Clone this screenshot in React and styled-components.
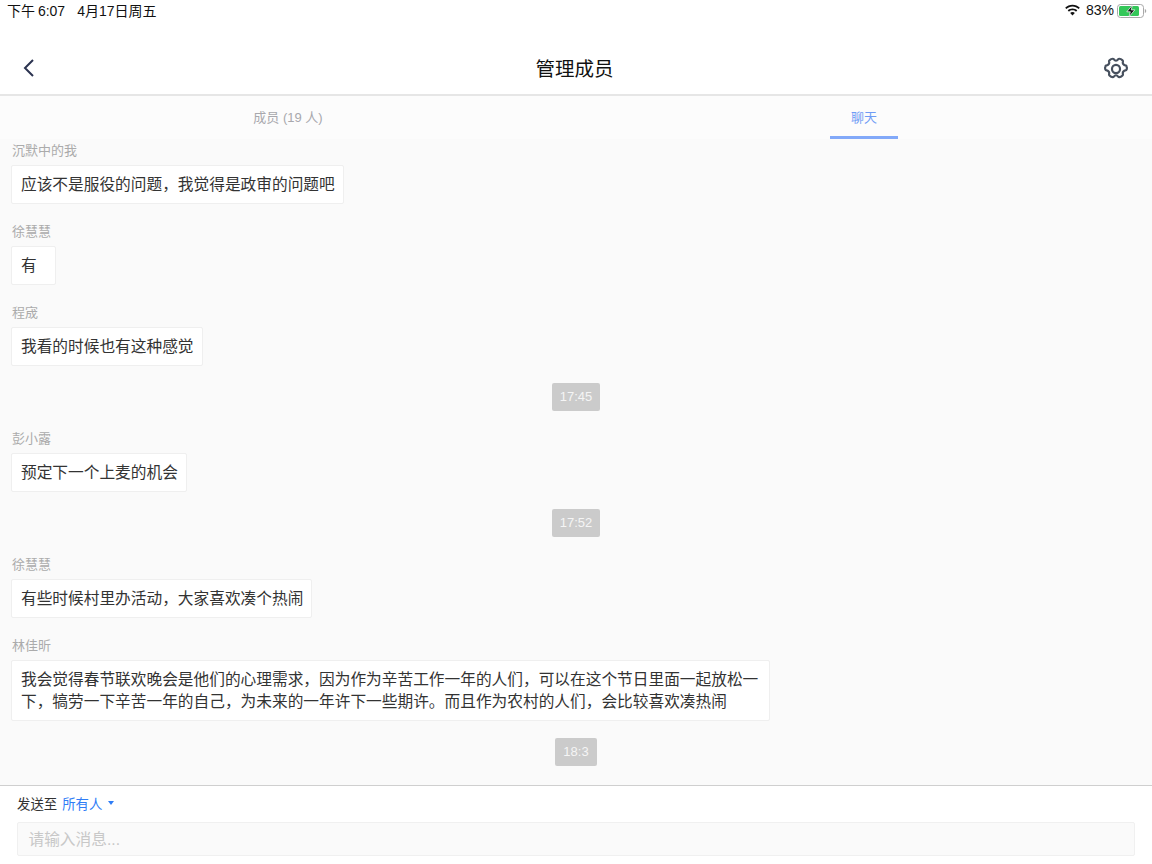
import React from 'react';
import styled, { createGlobalStyle } from 'styled-components';

const FONT = '"Liberation Sans", "Noto Sans CJK SC", sans-serif';

const GlobalStyle = createGlobalStyle`
  html, body {
    margin: 0;
    padding: 0;
    background: #fff;
    font-family: ${FONT};
  }
`;

const Page = styled.div`
  display: flex;
  flex-direction: column;
  width: 1152px;
  height: 864px;
  overflow: hidden;
  background: #fff;
`;

const StatusBar = styled.div`
  display: flex;
  justify-content: space-between;
  align-items: center;
  height: 23px;
  padding: 0 5px 3px 7px;
  box-sizing: border-box;
  font-size: 14px;
  color: #111;
`;

const StatusLeft = styled.div`
  display: flex;
  gap: 12px;
  word-spacing: -1px;
`;

const StatusRight = styled.div`
  display: flex;
  align-items: center;
  gap: 5px;

  svg {
    margin-top: 1px;
  }

  svg:last-child {
    margin-left: -2px;
  }
`;

const NavBar = styled.div`
  display: grid;
  grid-template-columns: 1fr auto 1fr;
  align-items: center;
  height: 73px;
  padding: 18px 24px 0 21px;
  box-sizing: border-box;
  border-bottom: 2px solid #e6e6e6;
`;

const NavTitle = styled.div`
  font-size: 19.5px;
  color: #111;
`;

const NavAction = styled.div`
  display: flex;
  justify-content: flex-end;
  padding-top: 2px;
`;

const Tabs = styled.div`
  display: flex;
  height: 43px;
  background: #fcfcfc;
`;

const Tab = styled.div`
  flex: 1;
  display: flex;
  justify-content: center;
`;

const TabLabel = styled.div`
  width: 68px;
  height: 43px;
  box-sizing: border-box;
  padding-top: 13px;
  font-size: 13px;
  line-height: 17px;
  white-space: nowrap;
  display: flex;
  justify-content: center;
  color: ${props => (props.$active ? '#6f9bf5' : '#a8a8ad')};
  border-bottom: ${props => (props.$active ? '3px solid #82a9f9' : 'none')};
`;

const ChatList = styled.div`
  flex: 1;
  min-height: 0;
  display: flex;
  flex-direction: column;
  padding: 4px 11px 0;
  background: #fafafa;
  overflow: hidden;
`;

const Message = styled.div`
  display: flex;
  flex-direction: column;
  align-items: flex-start;
  margin-bottom: 20px;
`;

const Sender = styled.div`
  height: 16px;
  margin: 0 0 6px 1px;
  font-size: 13px;
  line-height: 16px;
  color: #ababab;
`;

const Bubble = styled.div`
  min-width: 45px;
  max-width: 759px;
  box-sizing: border-box;
  padding: 8px 8px 7px 9px;
  border: 1px solid #efefef;
  border-radius: 2px;
  background: #fff;
  font-size: 15.7px;
  line-height: 22px;
  color: #333;
`;

const TimeRow = styled.div`
  display: flex;
  justify-content: center;
  margin: -3px 0 20px;
`;

const TimeChip = styled.div`
  height: 28px;
  padding: 0 8px;
  border-radius: 2px;
  background: #cbcbcb;
  font-size: 13px;
  line-height: 28px;
  color: #f5f5f5;
`;

const Footer = styled.div`
  height: 79px;
  box-sizing: border-box;
  border-top: 1px solid #cfcfcf;
  padding: 8px 17px 0;
  background: #fff;
`;

const SendTo = styled.div`
  display: flex;
  align-items: center;
  height: 17px;
  font-size: 13.4px;
  color: #333;
`;

const SendTarget = styled.span`
  margin-left: 5px;
  color: #2f7df6;
`;

const Caret = styled.span`
  width: 0;
  height: 0;
  margin: 1px 0 0 6px;
  border-left: 3.5px solid transparent;
  border-right: 3.5px solid transparent;
  border-top: 4px solid #2f7df6;
`;

const InputBox = styled.div`
  width: 1118px;
  height: 34px;
  margin-top: 11px;
  box-sizing: border-box;
  padding-left: 10.500px;
  border: 1px solid #f0f0f0;
  border-radius: 2px;
  background: #fafafa;
  font-size: 15.7px;
  line-height: 33px;
  color: #c8c8c8;
`;

const Wifi = () => (
  <svg width="17" height="13" viewBox="0 0 16 12">
    <path
      d="M8 2.300c2.200 0 4.200.9 5.700 2.300l1.200-1.300C13.100 1.600 10.700.6 8 .6S2.900 1.600 1.100 3.300l1.200 1.300C3.800 3.200 5.800 2.300 8 2.300zM8 5.800c1.300 0 2.400.5 3.300 1.300l1.200-1.300C11.300 4.700 9.700 4 8 4S4.700 4.700 3.500 5.800l1.200 1.300C5.600 6.300 6.700 5.800 8 5.800zM8 7.500c-.9 0-1.600.3-2.200.8L8 10.700l2.200-2.400C9.600 7.800 8.900 7.500 8 7.500z"
      fill="#111"
    />
  </svg>
);

const Battery = () => (
  <svg width="30" height="14" viewBox="0 0 30 14">
    <rect x="0.500" y="0.500" width="26" height="13" rx="3" fill="none" stroke="#a8a8a8" />
    <rect x="2" y="2" width="20" height="10" rx="1.500" fill="#34c759" />
    <path d="M27.800 5c.9.300 1.400 1.100 1.400 2s-.5 1.700-1.400 2z" fill="#a8a8a8" />
    <path d="M15.500 1 9.800 7.800h3.500l-1.300 5 5.800-6.900h-3.600z" fill="#111" stroke="#fff" strokeWidth="0.700" />
  </svg>
);

const BackIcon = () => (
  <svg width="16" height="20" viewBox="0 0 16 20">
    <path d="M12 2 4 10l8 8" fill="none" stroke="#2b3350" strokeWidth="2" />
  </svg>
);

const GearIcon = () => (
  <svg width="24" height="24" viewBox="1 1 22 22">
    <path
      d="M9 2.600c.5 0 .9.300 1.200.7.400.6 1 1 1.800 1s1.400-.4 1.800-1c.3-.4.7-.7 1.200-.7.800 0 2.300.8 3 1.500.5.400.4 1 .3 1.500-.2.700 0 1.500.5 2.100.5.600 1.100.9 1.800 1 .5 0 1 .3 1.100.8.300.8.300 2.200 0 3-.1.500-.6.800-1.100.8-.7.100-1.300.4-1.800 1-.5.600-.7 1.400-.5 2.100.1.500.2 1.100-.3 1.500-.7.700-2.200 1.500-3 1.500-.5 0-.9-.3-1.200-.7-.4-.6-1-1-1.800-1s-1.400.4-1.800 1c-.3.400-.7.700-1.200.7-.8 0-2.300-.8-3-1.500-.5-.4-.4-1-.3-1.500.2-.7 0-1.500-.5-2.100-.5-.6-1.100-.9-1.800-1-.5 0-1-.3-1.100-.8-.3-.8-.3-2.200 0-3 .1-.5.600-.8 1.100-.8.700-.1 1.300-.4 1.800-1 .5-.6.700-1.400.5-2.100-.1-.5-.2-1.100.3-1.500.7-.7 2.200-1.500 3-1.500z"
      fill="none"
      stroke="#47505e"
      strokeWidth="2"
      strokeLinejoin="round"
    />
    <circle cx="12" cy="12" r="3.700" fill="none" stroke="#47505e" strokeWidth="2" />
  </svg>
);

const chat = [
  { from: '沉默中的我', text: '应该不是服役的问题，我觉得是政审的问题吧' },
  { from: '徐慧慧', text: '有' },
  { from: '程宬', text: '我看的时候也有这种感觉' },
  { time: '17:45' },
  { from: '彭小露', text: '预定下一个上麦的机会' },
  { time: '17:52' },
  { from: '徐慧慧', text: '有些时候村里办活动，大家喜欢凑个热闹' },
  {
    from: '林佳昕',
    text: '我会觉得春节联欢晚会是他们的心理需求，因为作为辛苦工作一年的人们，可以在这个节日里面一起放松一下，犒劳一下辛苦一年的自己，为未来的一年许下一些期许。而且作为农村的人们，会比较喜欢凑热闹'
  },
  { time: '18:3' }
];

const App = () => (
  <Page>
    <GlobalStyle />
    <StatusBar>
      <StatusLeft>
        <span>下午 6:07</span>
        <span>4月17日周五</span>
      </StatusLeft>
      <StatusRight>
        <Wifi />
        <span>83%</span>
        <Battery />
      </StatusRight>
    </StatusBar>
    <NavBar>
      <BackIcon />
      <NavTitle>管理成员</NavTitle>
      <NavAction>
        <GearIcon />
      </NavAction>
    </NavBar>
    <Tabs>
      <Tab>
        <TabLabel>成员 (19 人)</TabLabel>
      </Tab>
      <Tab>
        <TabLabel $active>聊天</TabLabel>
      </Tab>
    </Tabs>
    <ChatList>
      {chat.map((item, i) =>
        item.time ? (
          <TimeRow key={i}>
            <TimeChip>{item.time}</TimeChip>
          </TimeRow>
        ) : (
          <Message key={i}>
            <Sender>{item.from}</Sender>
            <Bubble>{item.text}</Bubble>
          </Message>
        )
      )}
    </ChatList>
    <Footer>
      <SendTo>
        发送至
        <SendTarget>所有人</SendTarget>
        <Caret />
      </SendTo>
      <InputBox>请输入消息...</InputBox>
    </Footer>
  </Page>
);

export default App;
